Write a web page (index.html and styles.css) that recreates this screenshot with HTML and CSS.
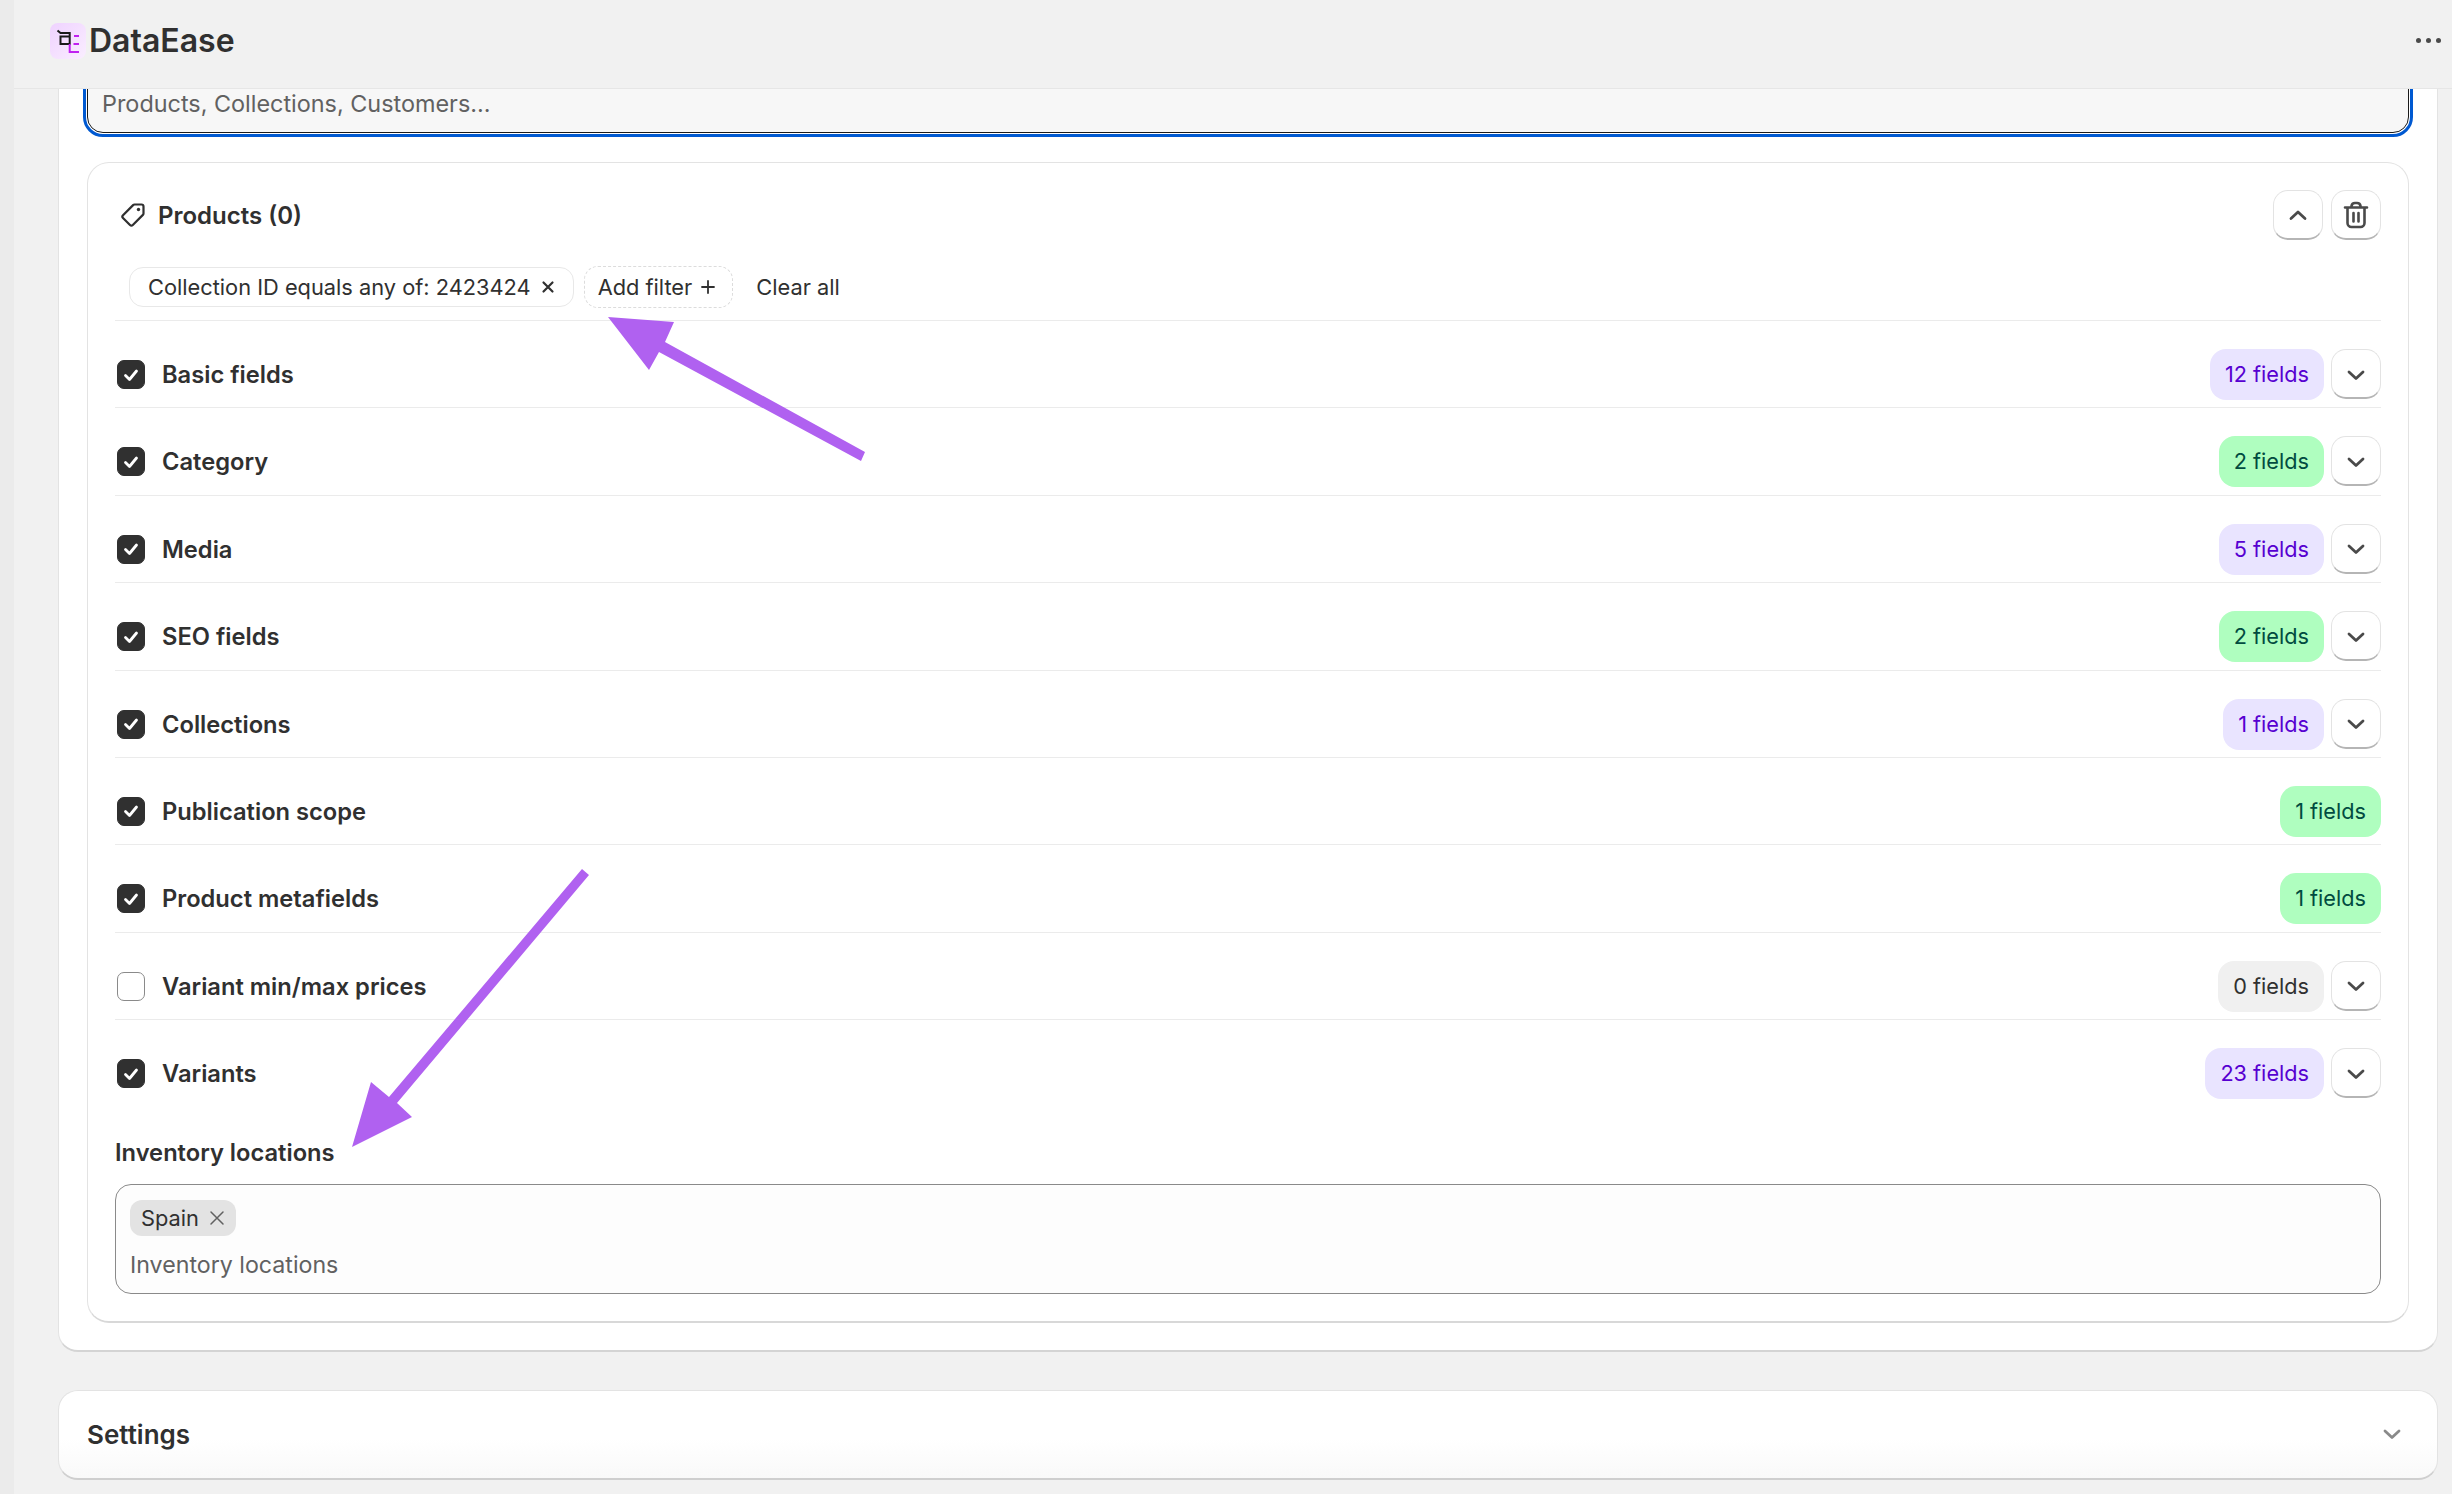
FILE: index.html
```html
<!DOCTYPE html>
<html lang="en">
<head>
<meta charset="utf-8">
<title>DataEase</title>
<link rel="stylesheet" href="styles.css">
</head>
<body>
<div class="rail"></div>
<div class="app">
  <header class="topbar">
    <div class="brand">
      <span class="logo">
        <svg width="36" height="36" viewBox="0 0 36 36" fill="none">
          <path d="M7.500 7.500l3 2.500h9.200v11H10.500v-7.500h9" stroke="#1a1a1a" stroke-width="2"/>
          <path d="M24 13h5M23.500 21h5.500M19.700 21v8H29" stroke="#c020f0" stroke-width="2"/>
        </svg>
      </span>
      <span class="brand-name">DataEase</span>
    </div>
    <div class="dots"><i></i><i></i><i></i></div>
  </header>
  <main class="content">
    <section class="card">
      <div class="search">Products, Collections, Customers...</div>
      <section class="panel">
        <div class="panel-head">
          <div class="panel-title">
            <svg class="tag" width="26" height="26" viewBox="0 0 26 26" fill="none">
              <path d="M14.500 2.500h7a2 2 0 0 1 2 2v7a2 2 0 0 1-.6 1.400L12.800 23a2 2 0 0 1-2.800 0L3 16a2 2 0 0 1 0-2.800L13.100 3.100a2 2 0 0 1 1.400-.6z" stroke="#303030" stroke-width="2.200" stroke-linejoin="round"/>
              <circle cx="18.500" cy="7.500" r="1.700" fill="#303030"/>
            </svg>
            <span>Products (0)</span>
          </div>
          <div class="panel-actions">
            <button class="icon-btn"><svg width="22" height="22" viewBox="0 0 22 22" fill="none"><path d="M4 14.500 11 8l7 6.500" stroke="#4a4a4a" stroke-width="2.800" stroke-linecap="round" stroke-linejoin="round"/></svg></button>
            <button class="icon-btn"><svg width="26" height="28" viewBox="0 0 26 28" fill="none" stroke="#4a4a4a" stroke-width="2.600" stroke-linecap="round" stroke-linejoin="round"><path d="M2 6.500h22M8.500 6.500V5a3.500 3.500 0 0 1 3.500-3h2a3.500 3.500 0 0 1 3.500 3v1.500M4.500 6.500V22a4 4 0 0 0 4 4h9a4 4 0 0 0 4-4V6.500M10.500 12v8.500M15.500 12v8.500"/></svg></button>
          </div>
        </div>
        <div class="filters">
          <span class="chip">Collection ID equals any of: 2423424<svg width="14" height="14" viewBox="0 0 14 14" fill="none"><path d="M2.500 2.500l9 9M11.500 2.500l-9 9" stroke="#303030" stroke-width="2.200" stroke-linecap="round"/></svg></span>
          <span class="chip add">Add filter<svg width="16" height="16" viewBox="0 0 16 16" fill="none"><path d="M8 2v12M2 8h12" stroke="#303030" stroke-width="1.800" stroke-linecap="round"/></svg></span>
          <span class="clear">Clear all</span>
        </div>
        <div class="rows">
          <div class="row"><span class="check on"><svg width="18" height="18" viewBox="0 0 18 18" fill="none"><path d="M3.500 9.500 7.500 13.500 14.500 5" stroke="#fff" stroke-width="2.800" stroke-linecap="round" stroke-linejoin="round"/></svg></span><span class="label">Basic fields</span><span class="badge purple">12 fields</span><button class="icon-btn down"><svg width="22" height="22" viewBox="0 0 22 22" fill="none"><path d="M4 9l7 6.500L18 9" stroke="#4a4a4a" stroke-width="2.800" stroke-linecap="round" stroke-linejoin="round"/></svg></button></div>
          <div class="row"><span class="check on"><svg width="18" height="18" viewBox="0 0 18 18" fill="none"><path d="M3.500 9.500 7.500 13.500 14.500 5" stroke="#fff" stroke-width="2.800" stroke-linecap="round" stroke-linejoin="round"/></svg></span><span class="label">Category</span><span class="badge green">2 fields</span><button class="icon-btn down"><svg width="22" height="22" viewBox="0 0 22 22" fill="none"><path d="M4 9l7 6.500L18 9" stroke="#4a4a4a" stroke-width="2.800" stroke-linecap="round" stroke-linejoin="round"/></svg></button></div>
          <div class="row"><span class="check on"><svg width="18" height="18" viewBox="0 0 18 18" fill="none"><path d="M3.500 9.500 7.500 13.500 14.500 5" stroke="#fff" stroke-width="2.800" stroke-linecap="round" stroke-linejoin="round"/></svg></span><span class="label">Media</span><span class="badge purple">5 fields</span><button class="icon-btn down"><svg width="22" height="22" viewBox="0 0 22 22" fill="none"><path d="M4 9l7 6.500L18 9" stroke="#4a4a4a" stroke-width="2.800" stroke-linecap="round" stroke-linejoin="round"/></svg></button></div>
          <div class="row"><span class="check on"><svg width="18" height="18" viewBox="0 0 18 18" fill="none"><path d="M3.500 9.500 7.500 13.500 14.500 5" stroke="#fff" stroke-width="2.800" stroke-linecap="round" stroke-linejoin="round"/></svg></span><span class="label">SEO fields</span><span class="badge green">2 fields</span><button class="icon-btn down"><svg width="22" height="22" viewBox="0 0 22 22" fill="none"><path d="M4 9l7 6.500L18 9" stroke="#4a4a4a" stroke-width="2.800" stroke-linecap="round" stroke-linejoin="round"/></svg></button></div>
          <div class="row"><span class="check on"><svg width="18" height="18" viewBox="0 0 18 18" fill="none"><path d="M3.500 9.500 7.500 13.500 14.500 5" stroke="#fff" stroke-width="2.800" stroke-linecap="round" stroke-linejoin="round"/></svg></span><span class="label">Collections</span><span class="badge purple">1 fields</span><button class="icon-btn down"><svg width="22" height="22" viewBox="0 0 22 22" fill="none"><path d="M4 9l7 6.500L18 9" stroke="#4a4a4a" stroke-width="2.800" stroke-linecap="round" stroke-linejoin="round"/></svg></button></div>
          <div class="row"><span class="check on"><svg width="18" height="18" viewBox="0 0 18 18" fill="none"><path d="M3.500 9.500 7.500 13.500 14.500 5" stroke="#fff" stroke-width="2.800" stroke-linecap="round" stroke-linejoin="round"/></svg></span><span class="label">Publication scope</span><span class="badge green">1 fields</span></div>
          <div class="row"><span class="check on"><svg width="18" height="18" viewBox="0 0 18 18" fill="none"><path d="M3.500 9.500 7.500 13.500 14.500 5" stroke="#fff" stroke-width="2.800" stroke-linecap="round" stroke-linejoin="round"/></svg></span><span class="label">Product metafields</span><span class="badge green">1 fields</span></div>
          <div class="row"><span class="check"></span><span class="label">Variant min/max prices</span><span class="badge grey">0 fields</span><button class="icon-btn down"><svg width="22" height="22" viewBox="0 0 22 22" fill="none"><path d="M4 9l7 6.500L18 9" stroke="#4a4a4a" stroke-width="2.800" stroke-linecap="round" stroke-linejoin="round"/></svg></button></div>
          <div class="row"><span class="check on"><svg width="18" height="18" viewBox="0 0 18 18" fill="none"><path d="M3.500 9.500 7.500 13.500 14.500 5" stroke="#fff" stroke-width="2.800" stroke-linecap="round" stroke-linejoin="round"/></svg></span><span class="label">Variants</span><span class="badge purple">23 fields</span><button class="icon-btn down"><svg width="22" height="22" viewBox="0 0 22 22" fill="none"><path d="M4 9l7 6.500L18 9" stroke="#4a4a4a" stroke-width="2.800" stroke-linecap="round" stroke-linejoin="round"/></svg></button></div>
        </div>
        <div class="field-label">Inventory locations</div>
        <div class="tagbox">
          <span class="pill">Spain<svg width="16" height="16" viewBox="0 0 16 16" fill="none"><path d="M2 2l12 12M14 2 2 14" stroke="#616161" stroke-width="1.500" stroke-linecap="round"/></svg></span>
          <div class="placeholder">Inventory locations</div>
        </div>
      </section>
    </section>
    <section class="settings">
      <span>Settings</span>
      <svg width="22" height="22" viewBox="0 0 22 22" fill="none"><path d="M4 8l7 6.500L18 8" stroke="#8a8a8a" stroke-width="2.800" stroke-linecap="round" stroke-linejoin="round"/></svg>
    </section>
  </main>
</div>
<svg class="arrows" width="2452" height="1494" viewBox="0 0 2452 1494">
  <polygon fill="#b061f0" points="608,317 674,322 665,342 865,452 861,461 659,352 649,370"/>
  <polygon fill="#b061f0" points="352,1147 371,1082 389,1097 582,869 589,875 397,1103 412,1117"/>
</svg>
</body>
</html>
```

FILE: styles.css
```css
* { box-sizing: border-box; }
html, body { margin: 0; height: 100%; }
body {
  display: flex;
  height: 1494px;
  overflow: hidden;
  background: #f1f1f1;
  font-family: Inter, "Liberation Sans", sans-serif;
  color: #303030;
  position: relative;
}
.rail { width: 14px; flex: none; background: #ebebeb; }
.app { flex: 1; min-width: 0; display: flex; flex-direction: column; height: 1494px; }

.topbar {
  height: 89px;
  flex: none;
  display: flex;
  align-items: center;
  justify-content: space-between;
  padding: 0 11px 7px 36px;
  background: #f1f1f1;
  border-bottom: 1px solid #e6e6e6;
  position: relative;
  z-index: 2;
}
.brand { display: flex; align-items: center; gap: 3px; }
.logo {
  width: 36px; height: 36px;
  border-radius: 8px;
  background: linear-gradient(135deg, #efd2ff, #faeeff);
  display: flex;
}
.brand-name { font-size: 32px; font-weight: 600; line-height: 40px; color: #303030; }
.dots { display: flex; gap: 5px; }
.dots i { width: 5px; height: 5px; border-radius: 50%; background: #4a4a4a; }

.content {
  flex: 1;
  min-height: 0;
  overflow: hidden;
  padding: 0 14px 0 44px;
}
.card {
  margin-top: -60px;
  background: #fff;
  border: 1px solid #e3e3e3;
  border-bottom: 2px solid #d4d4d4;
  border-radius: 20px;
  padding: 0 28px 27px;
}
.search {
  height: 103px;
  padding: 58px 0 0 14px;
  border: 1px solid #1a1a1a;
  border-radius: 16px;
  background: #f7f7f7;
  outline: 3px solid #0059d1;
  outline-offset: 1px;
  color: #616161;
  font-size: 23.400px;
  line-height: 30px;
}
.panel {
  margin-top: 29px;
  border: 1px solid #e3e3e3;
  border-bottom: 2px solid #d8d8d8;
  border-radius: 22px;
  padding: 27px 27px 27px;
}
.panel-head { display: flex; justify-content: space-between; align-items: center; height: 50px; }
.panel-title { display: flex; align-items: center; gap: 12px; padding-left: 5px; font-size: 24px; font-weight: 600; }
.panel-actions { display: flex; gap: 8px; }
.icon-btn {
  width: 50px; height: 50px;
  flex: none;
  padding: 0;
  background: #fff;
  border: 1.500px solid #e3e3e3;
  border-bottom: 2px solid #b5b5b5;
  border-radius: 15px;
  display: flex;
  align-items: center;
  justify-content: center;
}
.filters {
  display: flex;
  align-items: center;
  margin-top: 26px;
  padding: 0 0 12px 14px;
  border-bottom: 1px solid #ebebeb;
  font-size: 21.800px;
  line-height: 28px;
}
.chip {
  display: flex;
  align-items: center;
  height: 40px;
  padding: 0 18px 0 18px;
  gap: 10px;
  border: 1.500px solid #e8e8e8;
  border-radius: 14px;
}
.chip.add { height: 42px; margin-left: 10px; padding: 0 16px 0 13px; gap: 8px; border: 1.500px dashed #dcdcdc; }
.clear { margin-left: 23px; }

.row {
  display: flex;
  align-items: flex-start;
  height: 87.400px;
  padding-top: 28px;
  border-bottom: 1px solid #ebebeb;
}
.row:last-child { border-bottom: 0; }
.check {
  width: 28px; height: 29px;
  margin: 11px 17px 0 2px;
  flex: none;
  border: 1px solid #8a8a8a;
  border-radius: 7px;
  background: #fff;
  display: flex;
  align-items: center;
  justify-content: center;
}
.check.on { background: #303030; border-color: #303030; }
.label { flex: 1; font-size: 23.700px; font-weight: 600; line-height: 51px; }
.badge {
  height: 51px;
  padding: 0 15px;
  border-radius: 16px;
  font-size: 21.700px;
  line-height: 50px;
}
.purple { background: #e9e4ff; color: #5700d1; }
.green { background: #affebf; color: #014b40; }
.grey { background: #f0f0f0; color: #303030; }
.down { margin-left: 7px; }

.field-label { margin-top: 30px; font-size: 23.700px; font-weight: 600; line-height: 30px; }
.tagbox {
  margin-top: 16px;
  height: 110px;
  padding: 15px 14px;
  border: 1px solid #8a8a8a;
  border-radius: 16px;
  background: #fdfdfd;
}
.pill {
  display: inline-flex;
  align-items: center;
  gap: 10px;
  height: 36px;
  padding: 0 11px;
  border-radius: 12px;
  background: #e3e3e3;
  font-size: 21.800px;
}
.placeholder { margin-top: 14px; color: #616161; font-size: 23.200px; line-height: 30px; }

.settings {
  margin-top: 38px;
  height: 90px;
  display: flex;
  align-items: center;
  justify-content: space-between;
  padding: 0 34px 0 28px;
  border: 1px solid #e3e3e3;
  border-bottom: 2px solid #cfcfcf;
  border-radius: 20px;
  background: linear-gradient(#fff 55%, #f9f9f9);
  font-size: 26px;
  font-weight: 600;
}
.arrows { position: absolute; left: 0; top: 0; pointer-events: none; z-index: 3; }
```
